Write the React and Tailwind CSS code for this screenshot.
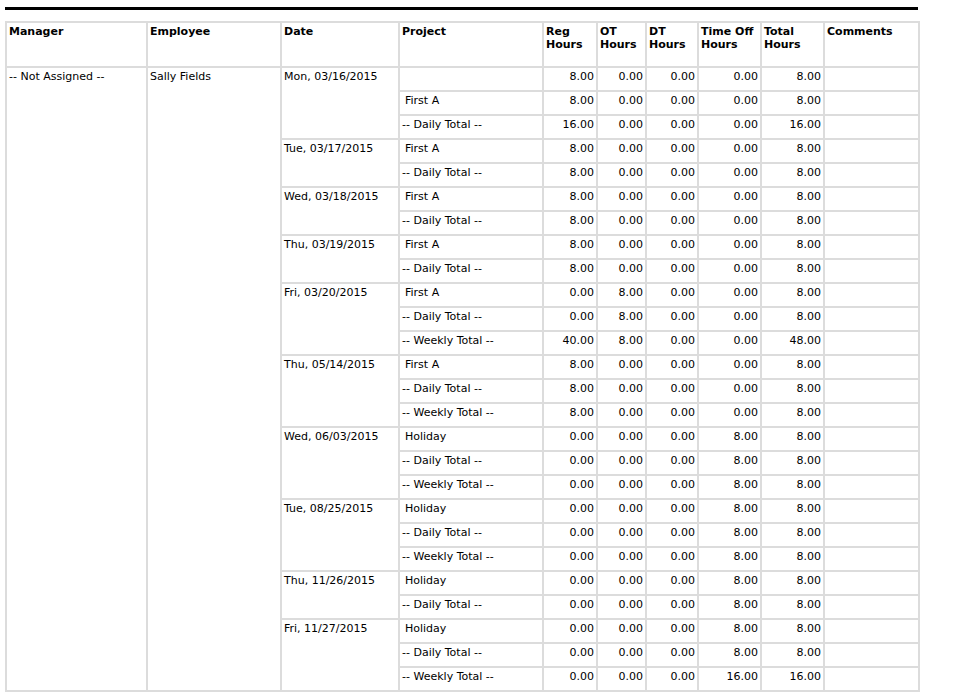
const groups = [
  ["Mon, 03/16/2015", [["", "8.00","0.00","0.00","0.00","8.00"],["First A","8.00","0.00","0.00","0.00","8.00"],["-- Daily Total --","16.00","0.00","0.00","0.00","16.00"]]],
  ["Tue, 03/17/2015", [["First A","8.00","0.00","0.00","0.00","8.00"],["-- Daily Total --","8.00","0.00","0.00","0.00","8.00"]]],
  ["Wed, 03/18/2015", [["First A","8.00","0.00","0.00","0.00","8.00"],["-- Daily Total --","8.00","0.00","0.00","0.00","8.00"]]],
  ["Thu, 03/19/2015", [["First A","8.00","0.00","0.00","0.00","8.00"],["-- Daily Total --","8.00","0.00","0.00","0.00","8.00"]]],
  ["Fri, 03/20/2015", [["First A","0.00","8.00","0.00","0.00","8.00"],["-- Daily Total --","0.00","8.00","0.00","0.00","8.00"],["-- Weekly Total --","40.00","8.00","0.00","0.00","48.00"]]],
  ["Thu, 05/14/2015", [["First A","8.00","0.00","0.00","0.00","8.00"],["-- Daily Total --","8.00","0.00","0.00","0.00","8.00"],["-- Weekly Total --","8.00","0.00","0.00","0.00","8.00"]]],
  ["Wed, 06/03/2015", [["Holiday","0.00","0.00","0.00","8.00","8.00"],["-- Daily Total --","0.00","0.00","0.00","8.00","8.00"],["-- Weekly Total --","0.00","0.00","0.00","8.00","8.00"]]],
  ["Tue, 08/25/2015", [["Holiday","0.00","0.00","0.00","8.00","8.00"],["-- Daily Total --","0.00","0.00","0.00","8.00","8.00"],["-- Weekly Total --","0.00","0.00","0.00","8.00","8.00"]]],
  ["Thu, 11/26/2015", [["Holiday","0.00","0.00","0.00","8.00","8.00"],["-- Daily Total --","0.00","0.00","0.00","8.00","8.00"]]],
  ["Fri, 11/27/2015", [["Holiday","0.00","0.00","0.00","8.00","8.00"],["-- Daily Total --","0.00","0.00","0.00","8.00","8.00"],["-- Weekly Total --","0.00","0.00","0.00","16.00","16.00"]]],
];
const total = groups.reduce((a, g) => a + g[1].length, 0);
const td = "border-2 border-[#dcdcdc] align-top px-[2px] pt-[2px] h-[24px]";
const num = td + " text-right";

export default function App() {
  const rows = [];
  let first = true;
  groups.forEach(([date, items]) => {
    items.forEach((it, i) => {
      rows.push(
        <tr key={rows.length}>
          {first && <td rowSpan={total} className={td}>-- Not Assigned --</td>}
          {first && <td rowSpan={total} className={td}>Sally Fields</td>}
          {i === 0 && <td rowSpan={items.length} className={td}>{date}</td>}
          <td className={td + (it[0].startsWith("--") ? "" : " pl-[5px]")}>{it[0]}</td>
          {it.slice(1).map((v, k) => <td key={k} className={num}>{v}</td>)}
          <td className={td}></td>
        </tr>
      );
      first = false;
    });
  });
  const heads = ["Manager","Employee","Date","Project",["Reg","Hours"],["OT","Hours"],["DT","Hours"],["Time Off","Hours"],["Total","Hours"],"Comments"];
  return (
    <div className="bg-white w-[959px] h-[699px] pl-[5px] pt-[7px] text-[11px] leading-[13px] text-black" style={{ fontFamily: "Verdana, 'DejaVu Sans', sans-serif" }}>
      <div className="w-[913px] h-[3px] bg-black mb-[11px]" />
      <table className="w-[913px] border-collapse table-fixed border-2 border-[#dcdcdc]">
        <colgroup>
          {[141,134,118,144,54,49,52,63,63,95].map((w, i) => <col key={i} style={{ width: w }} />)}
        </colgroup>
        <thead>
          <tr>
            {heads.map((h, i) => (
              <th key={i} className="border-2 border-[#dcdcdc] align-top text-left font-bold px-[2px] pt-[2px] h-[45px]">
                {Array.isArray(h) ? <>{h[0]}<br />{h[1]}</> : h}
              </th>
            ))}
          </tr>
        </thead>
        <tbody>{rows}</tbody>
      </table>
    </div>
  );
}
